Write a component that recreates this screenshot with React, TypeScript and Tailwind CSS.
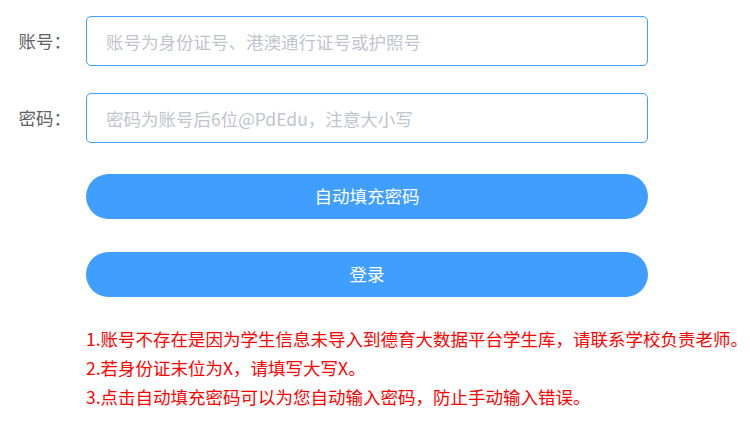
import React from "react";

const font = {
  fontFamily: '"Noto Sans CJK SC", "Noto Sans", "Liberation Sans", sans-serif',
};

function Row({ label, placeholder }: { label: string; placeholder: string }) {
  return (
    <div className="flex items-center h-[50px]">
      <label className="w-[86px] shrink-0 text-right pr-[15px] text-[17.5px] text-[#606266]">
        {label}
      </label>
      <input
        className="w-[562px] h-[50px] border border-[#409eff] rounded-[5px] pl-[19px] pr-[19px] text-[17.5px] text-[#606266] placeholder:text-[#c0c4cc] outline-none bg-white"
        placeholder={placeholder}
        style={font}
      />
    </div>
  );
}

export default function App() {
  return (
    <div className="w-[750px] h-[433px] bg-white pt-[16px] overflow-hidden" style={font}>
      <Row label="账号：" placeholder="账号为身份证号、港澳通行证号或护照号" />
      <div className="mt-[27px]">
        <Row label="密码：" placeholder="密码为账号后6位@PdEdu，注意大小写" />
      </div>
      <button
        className="ml-[86px] mt-[31px] block w-[562px] h-[45px] rounded-full bg-[#409eff] text-white text-[17.5px]"
        style={font}
      >
        自动填充密码
      </button>
      <button
        className="ml-[86px] mt-[33px] block w-[562px] h-[45px] rounded-full bg-[#409eff] text-white text-[17.5px]"
        style={font}
      >
        登录
      </button>
      <div className="ml-[86px] mt-[27px] text-[#ff0000] text-[17.5px] leading-[29px] whitespace-nowrap">
        <div>1.账号不存在是因为学生信息未导入到德育大数据平台学生库，请联系学校负责老师。</div>
        <div>2.若身份证末位为X，请填写大写X。</div>
        <div>3.点击自动填充密码可以为您自动输入密码，防止手动输入错误。</div>
      </div>
    </div>
  );
}
